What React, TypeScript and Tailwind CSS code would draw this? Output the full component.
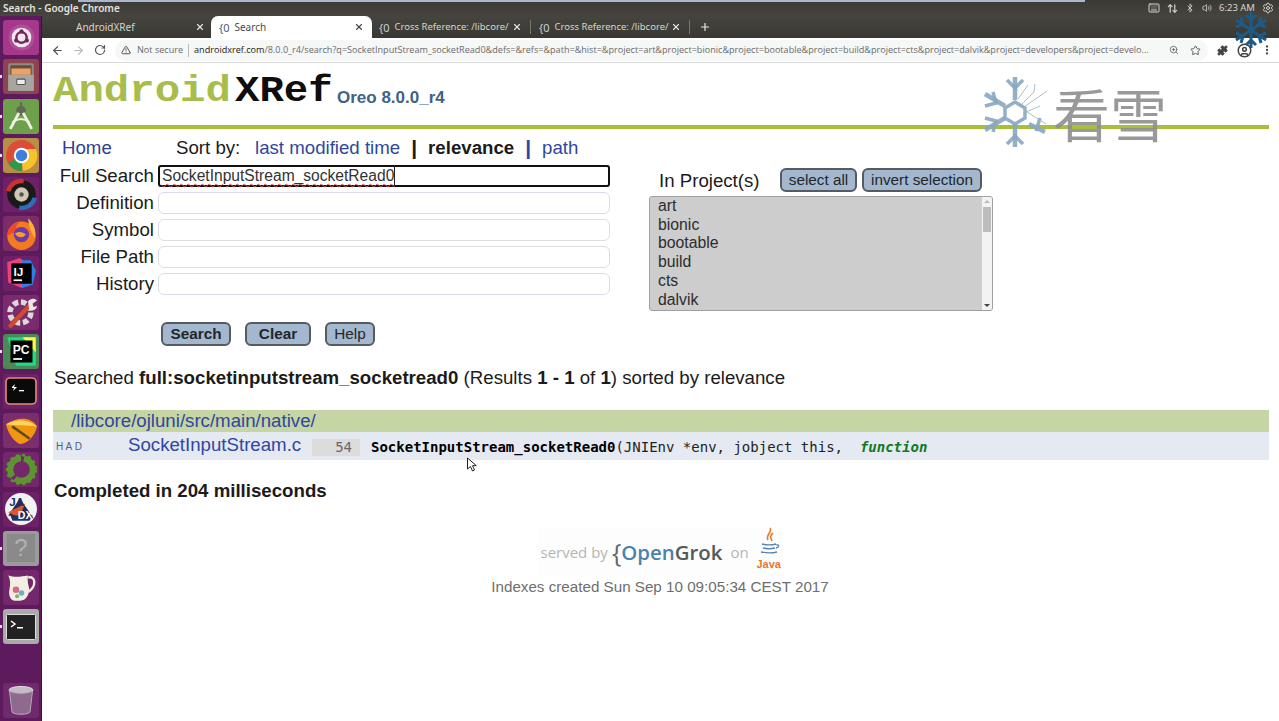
import React from "react";
import { ArrowLeft, ArrowRight, RotateCw, Star, Puzzle, MoreVertical, ZoomIn, Plus, X, TriangleAlert, CircleUser, Volume2, Bluetooth, ArrowUpDown, Settings, Keyboard } from "lucide-react";

const Tile = ({ bg, children, dot }: { bg: string; children?: React.ReactNode; dot?: boolean }) => (
  <div className="relative h-[35px] w-[36px] ml-[3px] shrink-0 rounded-[3px] flex items-center justify-center" style={{ background: bg }}>
    {dot && <span className="absolute left-[-3px] top-[16px] h-[3px] w-[2px] bg-gray-200" />}
    {children}
  </div>
);

const Ubuntu = () => (
  <svg width="27" height="27" viewBox="0 0 26 26"><circle cx="13" cy="13" r="12.500" fill="#b04f98" /><circle cx="13" cy="13" r="9.500" fill="#f3e6f0" /><circle cx="13" cy="13" r="5" fill="none" stroke="#6f2a5c" strokeWidth="2.400" /><circle cx="13" cy="7" r="2" fill="#6f2a5c" /><circle cx="7.800" cy="16" r="2" fill="#6f2a5c" /><circle cx="18.200" cy="16" r="2" fill="#6f2a5c" /></svg>
);
const Files = () => (
  <svg width="32" height="32" viewBox="0 0 30 30"><rect x="3" y="2" width="24" height="26" rx="2" fill="#8f8c88" /><rect x="5" y="4" width="20" height="9" fill="#6d4a35" /><rect x="6" y="7" width="18" height="6" fill="#e8a36a" /><rect x="3" y="13" width="24" height="15" fill="#a7a5a1" /><rect x="11" y="17" width="8" height="5" rx="1" fill="#eee" stroke="#555" /></svg>
);
const AStudio = () => (
  <svg width="32" height="32" viewBox="0 0 30 30" fill="none"><circle cx="15" cy="10" r="4.500" fill="#5f6b55" /><path d="M13 12 5 27M17 12l8 15" stroke="#eef3e6" strokeWidth="2.600" /><path d="M7 21c5-4 11-4 16 0" stroke="#eef3e6" strokeWidth="2" /><rect x="14" y="2" width="2" height="4" fill="#5f6b55" /></svg>
);
const ChromeIcon = () => (
  <svg width="33" height="33" viewBox="0 0 30 30"><circle cx="15" cy="15" r="14" fill="#dd4b39" /><path d="M15 15 3 22a14 14 0 0 0 13 7z" fill="#2c9a4b" /><path d="M15 15l1 14A14 14 0 0 0 28 9H15z" fill="#f5c42c" /><circle cx="15" cy="15" r="7" fill="#fff" /><circle cx="15" cy="15" r="5.200" fill="#3d7fe0" /></svg>
);
const Disc = () => (
  <svg width="33" height="33" viewBox="0 0 30 30" fill="none"><circle cx="15" cy="15" r="13" fill="#1a1a1a" /><path d="M3 12a12 12 0 0 1 14-9" stroke="#c9332b" strokeWidth="4" /><path d="M27 18a12 12 0 0 1-14 9" stroke="#2a6fb8" strokeWidth="4" /><circle cx="15" cy="15" r="6.500" fill="#cfc8b4" /><circle cx="15" cy="15" r="2" fill="#555" /></svg>
);
const Firefox = () => (
  <svg width="35" height="35" viewBox="0 0 32 32"><circle cx="16" cy="18" r="13" fill="#f47a20" /><path d="M22 2c5 5 8 11 6 18-3-5-5-9-6-18z" fill="#fbb03b" /><path d="M3 18C4 10 9 6 14 6c-2 2-3 3-3 5 4-1 8 1 9 4-5-2-12 0-17 3z" fill="#ea4a2a" /><circle cx="16" cy="17" r="7" fill="#6a3ab0" /><path d="M10 16c3-2 7-2 10 1-2 3-7 4-10-1z" fill="#f7a12b" /></svg>
);
const IJ = () => (
  <svg width="32" height="32" viewBox="0 0 30 30"><path d="M2 5 14 1l8 6-6 22L3 24z" fill="#e8437a" /><path d="M16 3h8l5 10-3 13-10 3z" fill="#2d7fe0" /><rect x="6" y="6" width="19" height="19" fill="#000" /><rect x="8" y="21" width="8" height="1.600" fill="#fff" /><text x="8" y="18" fontSize="11" fontWeight="700" fill="#fff" fontFamily="'Liberation Sans',sans-serif">IJ</text></svg>
);
const Tools = () => (
  <svg width="33" height="33" viewBox="0 0 30 30" fill="none"><circle cx="14" cy="15" r="9.500" stroke="#d9d9d9" strokeWidth="5" strokeDasharray="5 2.500" /><path d="M5 27 23 8" stroke="#cf4b2a" strokeWidth="4" strokeLinecap="round" /><path d="M21 5c2-3 6-3 8-1l-4 3 1 3 3-1c0 3-4 5-7 4z" fill="#e8e8e8" /></svg>
);
const PC = () => (
  <svg width="33" height="33" viewBox="0 0 30 30"><path d="M2 2h18l8 8v18H10z" fill="#21d789" /><path d="M16 2h12v14z" fill="#fcf84a" /><rect x="5" y="5" width="20" height="20" fill="#000" /><rect x="7.500" y="21" width="8" height="1.600" fill="#fff" /><text x="7" y="17.500" fontSize="11" fontWeight="700" fill="#fff" fontFamily="'Liberation Sans',sans-serif">PC</text></svg>
);
const Term1 = () => (
  <svg width="32" height="28" viewBox="0 0 32 28"><rect x="1" y="1" width="30" height="26" rx="4" fill="#0a0a0a" stroke="#e98a7a" strokeWidth="1.600" /><path d="M7 10l3-3-1 3h3l-4 4 1-3H7z" fill="#fff" /><rect x="14" y="13" width="5" height="1.300" fill="#fff" /></svg>
);
const Leaf = () => (
  <svg width="33" height="29" viewBox="0 0 32 28" fill="none"><path d="M1 8C12 0 26 1 31 10c-2 10-10 17-17 17C8 24 3 17 1 8z" fill="#f3960f" /><path d="M1 8C12 2 24 4 31 10c-10-1-20 0-30-2z" fill="#fcd35e" /><path d="M7 10l17 12" stroke="#5d4a20" strokeWidth="2.400" /></svg>
);
const Gear = () => (
  <svg width="33" height="33" viewBox="0 0 32 32" fill="none"><circle cx="16" cy="16" r="11" stroke="#5e9332" strokeWidth="6" strokeDasharray="24 3" /><circle cx="16" cy="16" r="14" stroke="#5e9332" strokeWidth="2.500" strokeDasharray="3 3" /></svg>
);
const Jadx = () => (
  <svg width="34" height="34" viewBox="0 0 32 32"><circle cx="16" cy="16" r="15" fill="#f2f2f2" /><path d="M4 22 15 6l13 19z" fill="#1c2a55" /><path d="M4 19 20 11l-6 13z" fill="#e0562a" /><path d="M8 27h16l3-5H6z" fill="#20306a" /><text x="5" y="13" fontSize="11" fontWeight="700" fill="#22305f" fontFamily="'Liberation Sans',sans-serif">JA</text><text x="13" y="25" fontSize="10" fontWeight="700" fill="#fff" fontFamily="'Liberation Sans',sans-serif">DX</text></svg>
);
const Jug = () => (
  <svg width="33" height="33" viewBox="0 0 30 30" fill="none"><path d="M3 4c6 2 12 1 18 0-1 4 0 8 1 12 0 6-3 11-8 11H9c-4 0-6-5-5-10 1-5 1-9-1-13z" fill="#f1eee4" /><path d="M21 6c7-2 8 8 0 13" stroke="#eceae2" strokeWidth="2.200" /><circle cx="10" cy="17" r="3" fill="#d86a86" /><circle cx="15" cy="20" r="2.500" fill="#6ab0c8" /><circle cx="11" cy="23" r="1.800" fill="#7cb36a" /></svg>
);
const Term2 = () => (
  <svg width="30" height="26" viewBox="0 0 30 26"><rect x="0.500" y="0.500" width="29" height="25" rx="1" fill="#222" stroke="#ddd" /><path d="m5 7 4 3-4 3" stroke="#fff" strokeWidth="1.500" fill="none" /><rect x="11" y="13" width="6" height="1.500" fill="#fff" /></svg>
);
const Trash = () => (
  <svg width="30" height="32" viewBox="0 0 30 32"><ellipse cx="15" cy="5" rx="12" ry="3.500" fill="#c4bcc4" stroke="#e0dce0" /><path d="M3.500 6 6 27c1 3 17 3 18 0L26.500 6c-5 3-18 3-23 0z" fill="#8f6a90" stroke="#b9a8ba" /></svg>
);

const Launcher = () => (
  <aside className="w-[42px] shrink-0 bg-[#5d1a5c] border-r border-[#3e1240] flex flex-col gap-[4.3px] pt-[4px] pb-[3px]">
    <Tile bg="#a5388a"><Ubuntu /></Tile>
    <Tile bg="#8f4350" dot><Files /></Tile>
    <Tile bg="#6ea04b" dot><AStudio /></Tile>
    <Tile bg="#b58f45" dot><ChromeIcon /></Tile>
    <Tile bg="#6f2168"><Disc /></Tile>
    <Tile bg="#7c2d69"><Firefox /></Tile>
    <Tile bg="#6f2168"><IJ /></Tile>
    <Tile bg="#7a2a6d"><Tools /></Tile>
    <Tile bg="#4b8a56" dot><PC /></Tile>
    <Tile bg="#6a2366"><Term1 /></Tile>
    <Tile bg="#7c2d6c"><Leaf /></Tile>
    <Tile bg="#74276b"><Gear /></Tile>
    <Tile bg="#6f2168"><Jadx /></Tile>
    <Tile bg="#9a9a9a" dot><span className="w-[28px] h-[28px] bg-[#8a8a8a] flex items-center justify-center text-[24px] text-[#b2b2b2] font-['Liberation_Sans']">?</span></Tile>
    <Tile bg="#74276b"><Jug /></Tile>
    <Tile bg="#aaaaaa" dot><Term2 /></Tile>
    <div className="mt-auto"><Tile bg="#6f2a6c"><Trash /></Tile></div>
  </aside>
);

const Favicon = ({ dark }: { dark?: boolean }) => (
  <span className={`text-[11px] leading-none font-['Noto_Sans'] ${dark ? "text-[#47607a]" : "text-[#c8d0d8]"}`}>{"{0"}</span>
);

const Tabs = () => (
  <div className="h-[22px] flex items-end bg-gradient-to-b from-[#45443e] to-[#393833] font-['Noto_Sans'] text-[10px] text-[#d6d5d0] shrink-0">
    <div className="w-[169px] h-full flex items-center pl-[34px] pr-[6px]">
      <span className="flex-1">AndroidXRef</span><X size={10} strokeWidth={2.6} className="text-[#e6e6e6]" />
    </div>
    <div className="w-[161px] h-full flex items-center pl-[8px] pr-[8px] gap-[5px] bg-white rounded-t-[7px] text-[#4b4b4b]">
      <Favicon dark /><span className="flex-1">Search</span><X size={10} strokeWidth={2.6} className="text-[#444]" />
    </div>
    <div className="w-[158px] h-full flex items-center pl-[7px] pr-[8px] gap-[5px]">
      <Favicon /><span className="flex-1 min-w-0 whitespace-nowrap text-[9.5px]">Cross Reference: /libcore/</span><X size={10} strokeWidth={2.6} className="text-[#e6e6e6] shrink-0" />
    </div>
    <div className="w-px h-[14px] mb-[4px] bg-[#77766f]" />
    <div className="w-[158px] h-full flex items-center pl-[8px] pr-[8px] gap-[5px]">
      <Favicon /><span className="flex-1 min-w-0 whitespace-nowrap text-[9.5px]">Cross Reference: /libcore/</span><X size={10} strokeWidth={2.6} className="text-[#e6e6e6] shrink-0" />
    </div>
    <div className="w-px h-[14px] mb-[4px] bg-[#77766f]" />
    <div className="h-full flex items-center pl-[9px]"><Plus size={12} strokeWidth={2.4} className="text-[#e8e8e8]" /></div>
  </div>
);

const Toolbar = () => (
  <div className="h-[25px] flex items-center bg-white border-b border-[#d8d8d8] shrink-0 font-['Open_Sans'] text-[#5f6368]">
    <div className="w-[73px] flex items-center pl-[9px] gap-[8px]">
      <ArrowLeft size={13} strokeWidth={2.2} className="text-[#555]" />
      <ArrowRight size={13} strokeWidth={2} className="text-[#b9b9b9]" />
      <RotateCw size={12} strokeWidth={2.4} className="text-[#555] ml-[1px]" />
    </div>
    <div className="w-[1093px] h-[21px] rounded-full bg-[#f6f7f7] flex items-center pl-[6px] pr-[7px] text-[9.08px] whitespace-nowrap overflow-hidden">
      <TriangleAlert size={10} strokeWidth={2.4} className="text-[#555] shrink-0" />
      <span className="ml-[6px] text-[#6a6a6a]">Not secure</span>
      <span className="mx-[5px] h-[13px] w-px bg-[#bbb]" />
      <span className="flex-1 overflow-hidden"><span className="text-[#222]">androidxref.com</span><span className="text-[#6a6a6a]">/8.0.0_r4/search?q=SocketInputStream_socketRead0&amp;defs=&amp;refs=&amp;path=&amp;hist=&amp;project=art&amp;project=bionic&amp;project=bootable&amp;project=build&amp;project=cts&amp;project=dalvik&amp;project=developers&amp;project=develo...</span></span>
      <ZoomIn size={10} className="ml-[14px] text-[#666] shrink-0" />
      <Star size={11} className="ml-[11px] text-[#555] shrink-0" />
    </div>
    <div className="flex items-center pl-[9px] gap-[9px]">
      <Puzzle size={11} fill="#444" className="text-[#444]" />
      <CircleUser size={15} strokeWidth={2.4} className="text-[#444]" />
      <MoreVertical size={12} strokeWidth={2.6} className="text-[#444]" />
    </div>
  </div>
);

const Field = ({ label, children }: { label: string; children?: React.ReactNode }) => (
  <div className="flex items-center h-[22px] mb-[5px]">
    <span className="w-[105px] text-right pr-[4px] shrink-0 text-[#1b1b1b]">{label}</span>
    {children ?? <div className="w-[452px] h-[22px] rounded-[6px] border border-[#dcdce8] bg-white" />}
  </div>
);

const Btn = ({ children, bold, w }: { children: React.ReactNode; bold?: boolean; w: string }) => (
  <button className={`${w} h-[24px] rounded-[6px] bg-[#a3b8cf] border-2 border-[#555b60] text-[#22262a] text-[15.3px] leading-none ${bold ? "font-bold" : ""}`}>{children}</button>
);

const Watermark = () => (
  <div className="absolute left-[982px] top-[74px] flex items-center gap-[3px] pointer-events-none">
    <svg width="68" height="76" viewBox="0 0 68 76" fill="none" stroke="#8aa6bf" strokeOpacity="0.9">
      <g strokeWidth="4.5">
        <path d="M33 3v23M33 50v23M3 20l20 12M3 56l20-12M47 50l16 8" />
        <path d="M25 6l8 8 8-8M25 70l8-8 8 8M3 32l11-3-3-11M3 44l11 3-3 11M58 44l-4 13" strokeWidth="3.5" />
      </g>
      <path d="m33 28 10 6v10l-10 6-10-6V34z" strokeWidth="3.5" />
      <path d="M42 33 65 17M42 36l22 14M40 30l12-12 1-8M36 25l10-14M44 38l14-6" stroke="#9fb7cb" strokeWidth="1" />
    </svg>
    <span className="text-[57px] leading-none text-[#8f8f8f] opacity-90 font-['Noto_Sans_CJK_SC'] font-normal">看雪</span>
  </div>
);

const OpenGrok = () => (
  <div className="h-[50px] w-[245px] mx-auto flex items-center bg-[#fdfdfd] font-['Open_Sans']">
    <span className="text-[15px] text-[#b5b5b5] whitespace-nowrap ml-[3px]">served by</span>
    <span className="text-[25px] text-[#666] ml-[4px] leading-none">{"{"}</span>
    <span className="text-[20.4px] font-semibold text-[#4b82ab] leading-none">Open</span>
    <span className="text-[20.4px] font-semibold text-[#55595c] leading-none">Grok</span>
    <span className="text-[15px] text-[#b5b5b5] ml-[8px]">on</span>
    <div className="ml-[8px] -mt-[8px] flex flex-col items-center w-[24px]">
      <svg width="24" height="32" viewBox="0 0 24 32" fill="none">
        <path d="M13 1c3 4-5 7-2 12M16 6c-4 3-2 5-1 8" stroke="#e8772e" strokeWidth="1.6" />
        <path d="M5 17c4 1 10 1 14 0M6 21c4 1 8 1 12 0M4 25c5 1 12 1 16 0M19 18c3-1 4 2 0 3" stroke="#5b82a8" strokeWidth="1.3" />
      </svg>
      <span className="text-[11px] leading-none font-semibold text-[#e8772e] font-['Liberation_Sans_Narrow','Liberation_Sans']">Java</span>
    </div>
  </div>
);

const Page = () => (
  <main className="relative flex-1 bg-white pl-[11px] pr-[10px] font-['Liberation_Sans',sans-serif] text-[18.67px] leading-[22px] text-[#1b1b1b] overflow-hidden">
    <header className="h-[62px] flex items-start pt-[10px] font-['Liberation_Mono',monospace] font-bold whitespace-nowrap">
      <span className="w-[182px] inline-block origin-left scale-x-[1.145] text-[37px] leading-[36px] text-[#a9bd4c]">Android</span>
      <span className="w-[102px] inline-block origin-left scale-x-[1.1] text-[37px] leading-[36px] text-[#0e0e0e]">XRef</span>
      <span className="mt-[16px] text-[17px] leading-[18px] text-[#3f6286] font-['Liberation_Sans']">Oreo 8.0.0_r4</span>
    </header>
    <div className="h-[4px] bg-[#a9bf3a]" />
    <nav className="h-[34px] pt-[3px] flex items-center whitespace-nowrap">
      <a className="ml-[9px] w-[114px] text-[#2f3f8f]">Home</a>
      <span className="w-[79px]">Sort by:</span>
      <a className="text-[#2f47a0]">last modified time</a>
      <span className="mx-[11px] font-bold text-[21px]">|</span>
      <b>relevance</b>
      <span className="mx-[11px] text-[#2f47a0] font-bold text-[21px]">|</span>
      <a className="text-[#2f47a0]">path</a>
    </nav>
    <section className="flex h-[196px]">
      <div className="w-[596px] pt-[2px]">
        <Field label="Full Search">
          <div className="w-[452px] h-[22px] rounded-[3px] border-2 border-[#111] bg-white flex items-center pl-[2px] text-[#333] text-[15.6px] whitespace-nowrap">
            <span className="underline decoration-wavy decoration-[#d9534f] decoration-1 underline-offset-2 border-r border-[#222]">SocketInputStream_socketRead0</span>
          </div>
        </Field>
        <Field label="Definition" />
        <Field label="Symbol" />
        <Field label="File Path" />
        <Field label="History" />
        <div className="flex gap-[14px] pl-[108px] pt-[22px]">
          <Btn bold w="w-[70px]">Search</Btn>
          <Btn bold w="w-[66px]">Clear</Btn>
          <Btn w="w-[50px]">Help</Btn>
        </div>
      </div>
      <div className="pt-[2px]">
        <div className="h-[31px] flex items-center pl-[10px]">
          <span className="w-[121px]">In Project(s)</span>
          <div className="flex gap-[5px] mb-[2px]">
            <Btn w="w-[77px]">select all</Btn>
            <Btn w="w-[120px]">invert selection</Btn>
          </div>
        </div>
        <div className="w-[344px] h-[115px] rounded-[3px] border border-[#a0a0a0] bg-[#cdcdcd] flex text-[15.8px] leading-[18.7px] text-[#2c2c2c] overflow-hidden">
          <div className="flex-1 pl-[8px]">
            {["art", "bionic", "bootable", "build", "cts", "dalvik"].map((p) => <div key={p}>{p}</div>)}
          </div>
          <div className="w-[10px] bg-[#f3f3f3] flex flex-col items-center justify-between py-[3px]">
            <span className="w-0 h-0 border-x-[3px] border-x-transparent border-b-[3px] border-b-[#bbb]" />
            <span className="absolute mt-[7px] w-[8px] h-[25px] bg-[#bcbcbc]" />
            <span className="w-0 h-0 border-x-[3px] border-x-transparent border-t-[3px] border-t-[#444]" />
          </div>
        </div>
      </div>
    </section>
    <p className="h-[22px] pl-[1px] mt-[8px] whitespace-nowrap">
      Searched <b>full:socketinputstream_socketread0</b> (Results <b>1 - 1</b> of <b>1</b>) sorted by relevance
    </p>
    <div className="mt-[21px] h-[22px] bg-[#c5d5a3] pl-[18px] flex items-center text-[#2f47a0]">/libcore/ojluni/src/main/native/</div>
    <div className="h-[28px] bg-[#e5e9f2] flex items-center whitespace-nowrap">
      <span className="w-[75px] pl-[3px] mt-[1px] text-[10px] tracking-[2.4px] text-[#4d5f8c]">HAD</span>
      <a className="w-[184px] text-[#2f47a0] leading-none -mt-[1px]">SocketInputStream.c</a>
      <span className="w-[48px] h-[17px] mt-[2px] bg-[#dcdcdc] text-right pr-[8px] text-[14px] leading-[17px] text-[#666] font-['DejaVu_Sans_Mono',monospace]">54</span>
      <span className="ml-[11px] mt-[2px] text-[14px] text-[#222] font-['DejaVu_Sans_Mono',monospace] whitespace-pre"><b className="text-black">SocketInputStream_socketRead0</b>(JNIEnv *env, jobject this,  <b className="italic text-[#0f7a1f]">function</b></span>
    </div>
    <p className="mt-[20px] h-[22px] pl-[1px] font-bold">Completed in 204 milliseconds</p>
    <div className="mt-[25px] pr-[2px]">
      <OpenGrok />
      <p className="mt-[1px] text-center text-[15.2px] leading-[18px] text-[#6e6e6e]">Indexes created Sun Sep 10 09:05:34 CEST 2017</p>
    </div>
  </main>
);

export default function App() {
  return (
    <div className="relative w-[1279px] h-[721px] overflow-hidden flex flex-col bg-white">
      <div className="h-[16px] shrink-0 bg-gradient-to-b from-[#3a3934] to-[#45443e] flex items-center justify-between pl-[3px] pr-[5px] font-['Noto_Sans'] text-[#e4e3df]">
        <span className="text-[10px] font-semibold">Search - Google Chrome</span>
        <div className="flex items-center gap-[7px] text-[#d5d5d0]">
          <Keyboard size={12} />
          <ArrowUpDown size={11} strokeWidth={2.6} />
          <Bluetooth size={10} />
          <Volume2 size={10} />
          <span className="text-[9.5px]">6:23 AM</span>
          <Settings size={12} />
        </div>
      </div>
      <div className="absolute left-[78px] top-0 w-[1007px] h-[2px] bg-[#a9b6cf]" />
      <div className="flex flex-1 min-h-0">
        <Launcher />
        <div className="flex-1 min-w-0 flex flex-col">
          <Tabs />
          <Toolbar />
          <Page />
        </div>
      </div>
      <Watermark />
      <svg className="absolute left-[1233px] top-[10px]" width="36" height="40" viewBox="0 0 36 40" fill="none" stroke="#1d5a88" strokeWidth="3">
        <path d="M18 2v36M3 10l30 20M33 10 3 30M13 5l5 5 5-5M13 35l5-5 5 5M3 17l7-3-2-7M33 17l-7-3 2-7M3 23l7 3-2 7M33 23l-7 3 2 7" />
      </svg>
      <svg className="absolute left-[466px] top-[457px]" width="11" height="15" viewBox="0 0 11 15"><path d="M1.500 1v11l3-2.500 2 4.500 2-1-2-4.300h3.800z" fill="#fff" stroke="#222" /></svg>
    </div>
  );
}
